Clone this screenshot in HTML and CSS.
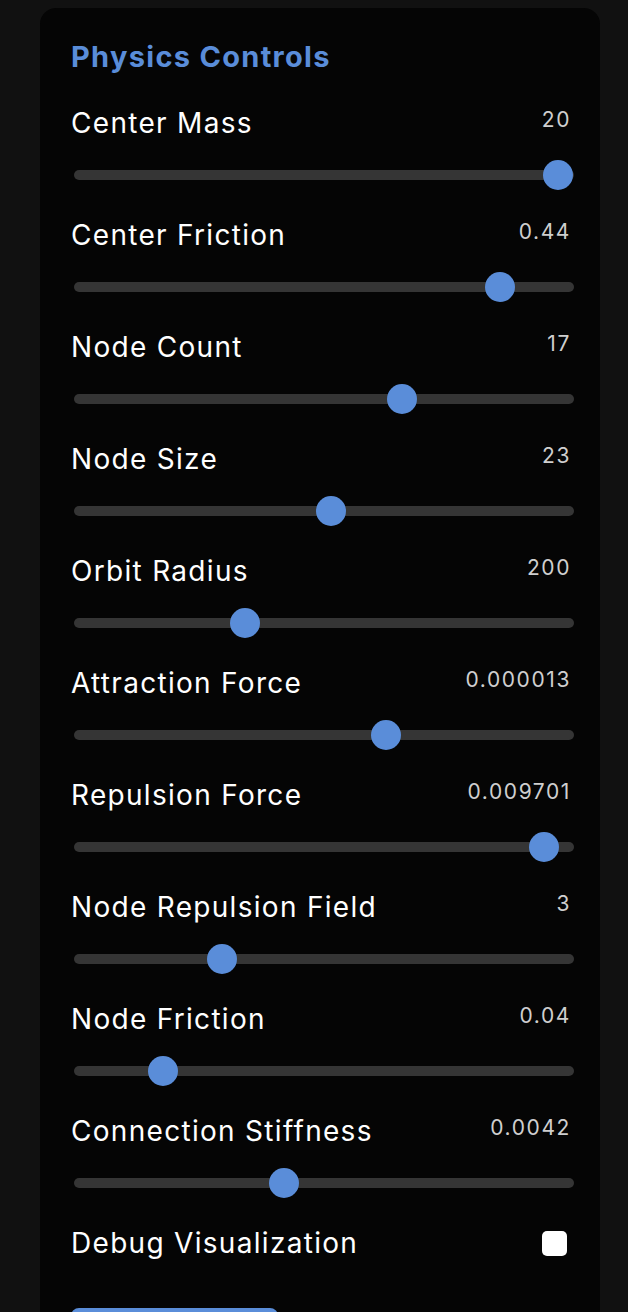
FILE: index.html
```html
<!DOCTYPE html>
<html lang="en">
<head>
<meta charset="utf-8">
<title>Physics Controls</title>
<link rel="stylesheet" href="styles.css">
</head>
<body>
<div class="panel">
  <h2 class="title">Physics Controls</h2>

  <div class="control">
    <div class="control-head"><span class="label">Center Mass</span><span class="value">20</span></div>
    <div class="slider"><div class="track"></div><div class="thumb" style="left: calc((100% - 30px) * 0.998)"></div></div>
  </div>
  <div class="control">
    <div class="control-head"><span class="label">Center Friction</span><span class="value">0.44</span></div>
    <div class="slider"><div class="track"></div><div class="thumb" style="left: calc((100% - 30px) * 0.874)"></div></div>
  </div>
  <div class="control">
    <div class="control-head"><span class="label">Node Count</span><span class="value">17</span></div>
    <div class="slider"><div class="track"></div><div class="thumb" style="left: calc((100% - 30px) * 0.666)"></div></div>
  </div>
  <div class="control">
    <div class="control-head"><span class="label">Node Size</span><span class="value">23</span></div>
    <div class="slider"><div class="track"></div><div class="thumb" style="left: calc((100% - 30px) * 0.515)"></div></div>
  </div>
  <div class="control">
    <div class="control-head"><span class="label">Orbit Radius</span><span class="value">200</span></div>
    <div class="slider"><div class="track"></div><div class="thumb" style="left: calc((100% - 30px) * 0.332)"></div></div>
  </div>
  <div class="control">
    <div class="control-head"><span class="label">Attraction Force</span><span class="value">0.000013</span></div>
    <div class="slider"><div class="track"></div><div class="thumb" style="left: calc((100% - 30px) * 0.632)"></div></div>
  </div>
  <div class="control">
    <div class="control-head"><span class="label">Repulsion Force</span><span class="value">0.009701</span></div>
    <div class="slider"><div class="track"></div><div class="thumb" style="left: calc((100% - 30px) * 0.968)"></div></div>
  </div>
  <div class="control">
    <div class="control-head"><span class="label">Node Repulsion Field</span><span class="value">3</span></div>
    <div class="slider"><div class="track"></div><div class="thumb" style="left: calc((100% - 30px) * 0.283)"></div></div>
  </div>
  <div class="control">
    <div class="control-head"><span class="label">Node Friction</span><span class="value">0.04</span></div>
    <div class="slider"><div class="track"></div><div class="thumb" style="left: calc((100% - 30px) * 0.157)"></div></div>
  </div>
  <div class="control">
    <div class="control-head"><span class="label">Connection Stiffness</span><span class="value">0.0042</span></div>
    <div class="slider"><div class="track"></div><div class="thumb" style="left: calc((100% - 30px) * 0.415)"></div></div>
  </div>

  <div class="toggle-row">
    <span class="label">Debug Visualization</span>
    <span class="checkbox"></span>
  </div>

  <button class="reset-btn" aria-label="Reset defaults"></button>
</div>
</body>
</html>
```

FILE: styles.css
```css
* { box-sizing: border-box; }

html, body {
  margin: 0;
  background: #111111;
}

body {
  padding-top: 8px;
  font-family: Inter, "Noto Sans", "Liberation Sans", sans-serif;
  overflow: hidden;
  height: 1312px;
}

.panel {
  margin-left: 40px;
  width: 560px;
  min-height: 1400px;
  background: #050505;
  border-radius: 16px;
  padding: 32px 30px 30px 31px;
}

.title {
  margin: 0 0 31px 0;
  font-size: 29px;
  line-height: 34px;
  font-weight: 700;
  letter-spacing: 1.3px;
  color: #5a8dd9;
}

.control {
  margin-bottom: 27px;
}

.control-head {
  display: flex;
  justify-content: space-between;
  align-items: center;
  height: 36px;
  margin-bottom: 19px;
}

.label {
  font-size: 28px;
  line-height: 36px;
  letter-spacing: 1.3px;
  color: #ffffff;
}

.value {
  font-size: 21px;
  line-height: 24px;
  letter-spacing: 1.6px;
  color: #cfcfcf;
  margin-top: -6px;
  margin-right: -1px;
}

.slider {
  position: relative;
  height: 30px;
  margin-left: 3px;
  width: 500px;
}

.track {
  position: absolute;
  left: 0;
  right: 0;
  top: 10px;
  height: 10px;
  border-radius: 5px;
  background: #353535;
}

.thumb {
  position: absolute;
  top: 0;
  width: 30px;
  height: 30px;
  border-radius: 50%;
  background: #5a8dd9;
}

.toggle-row {
  display: flex;
  justify-content: space-between;
  align-items: center;
  height: 36px;
  margin-bottom: 47px;
}

.checkbox {
  width: 25px;
  height: 25px;
  border-radius: 5px;
  background: #ffffff;
  margin-right: 3px;
}

.reset-btn {
  display: block;
  width: 207px;
  height: 56px;
  padding: 0;
  border: none;
  border-radius: 8px;
  background: #5a8dd9;
}
```
